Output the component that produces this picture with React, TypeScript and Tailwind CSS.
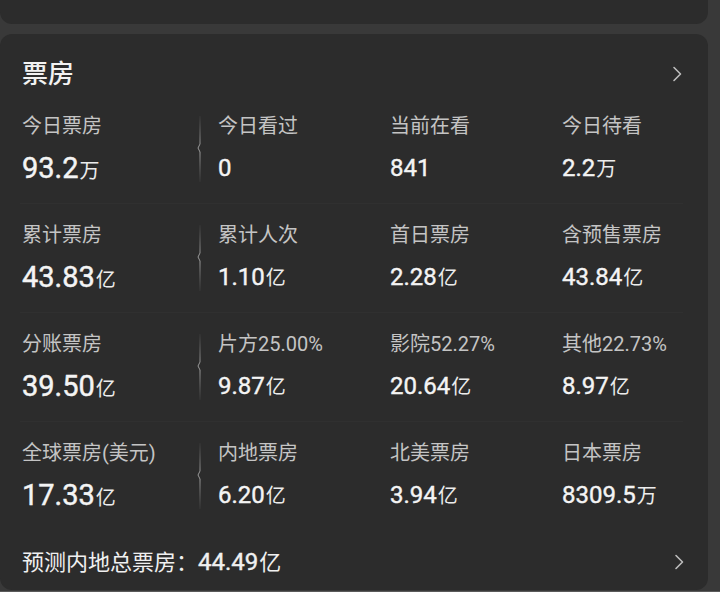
import React from "react";

const FONT = { fontFamily: 'Roboto, "Noto Sans CJK SC", "Noto Sans", sans-serif' };

function Chevron() {
  return (
    <svg width="10" height="16" viewBox="0 0 10 16" fill="none">
      <polyline points="2,1.5 8.5,8 2,14.5" stroke="#bdbdbd" strokeWidth="1.6" strokeLinecap="round" strokeLinejoin="round" />
    </svg>
  );
}

function VDivider() {
  return (
    <svg width="6" height="66" viewBox="0 0 6 66" fill="none">
      <defs>
        <linearGradient id="vg" x1="0" y1="0" x2="0" y2="1">
          <stop offset="0" stopColor="#8a8a8a" stopOpacity="0.1" />
          <stop offset="0.45" stopColor="#9a9a9a" stopOpacity="1" />
          <stop offset="0.55" stopColor="#9a9a9a" stopOpacity="1" />
          <stop offset="1" stopColor="#8a8a8a" stopOpacity="0.1" />
        </linearGradient>
      </defs>
      <path d="M4 0 L4 28 L2 32 L4 36 L4 66" stroke="url(#vg)" strokeWidth="1" />
    </svg>
  );
}

type Cell = { label: string; value: string; unit?: string };

const rows: Cell[][] = [
  [
    { label: "今日票房", value: "93.2", unit: "万" },
    { label: "今日看过", value: "0" },
    { label: "当前在看", value: "841" },
    { label: "今日待看", value: "2.2", unit: "万" },
  ],
  [
    { label: "累计票房", value: "43.83", unit: "亿" },
    { label: "累计人次", value: "1.10", unit: "亿" },
    { label: "首日票房", value: "2.28", unit: "亿" },
    { label: "含预售票房", value: "43.84", unit: "亿" },
  ],
  [
    { label: "分账票房", value: "39.50", unit: "亿" },
    { label: "片方25.00%", value: "9.87", unit: "亿" },
    { label: "影院52.27%", value: "20.64", unit: "亿" },
    { label: "其他22.73%", value: "8.97", unit: "亿" },
  ],
  [
    { label: "全球票房(美元)", value: "17.33", unit: "亿" },
    { label: "内地票房", value: "6.20", unit: "亿" },
    { label: "北美票房", value: "3.94", unit: "亿" },
    { label: "日本票房", value: "8309.5", unit: "万" },
  ],
];

function CellView({ c, big }: { c: Cell; big: boolean }) {
  return (
    <div className="flex flex-col">
      <div className="text-[20px] leading-[28px] text-[#c4c4c4] whitespace-nowrap">{c.label}</div>
      <div className="mt-[10px] flex items-baseline h-[36px] leading-[36px] text-[#f4f4f4] whitespace-nowrap">
        <span
          className={
            big
              ? "text-[29px] font-normal [-webkit-text-stroke:0.45px_#f4f4f4]"
              : "text-[24px] font-normal [-webkit-text-stroke:0.4px_#f4f4f4]"
          }
        >
          {c.value}
        </span>
        {c.unit && <span className="text-[20px] ml-[1px] text-[#ececec]">{c.unit}</span>}
      </div>
    </div>
  );
}

export default function App() {
  return (
    <div className="w-[720px] h-[602px] bg-[#393939] overflow-hidden flex flex-col" style={FONT}>
      <div className="w-[708px] h-[24px] bg-[#2c2c2c] rounded-b-[12px] shrink-0" />
      <div className="w-[708px] h-[556px] mt-[10px] bg-[#2c2c2c] rounded-[12px] shrink-0 pt-[22px] pl-[22px] pr-[24px] flex flex-col">
        <div className="flex items-center justify-between h-[36px]">
          <div className="text-[26px] font-medium text-[#f2f2f2] leading-[36px]">票房</div>
          <div className="mr-[2px]"><Chevron /></div>
        </div>
        <div className="mt-[20px] flex flex-col">
          {rows.map((r, i) => (
            <div key={i} className="flex flex-col">
              {i > 0 && (
                <div className="h-[35px] flex items-center">
                  <div className="w-[663px] -ml-[2px] h-px bg-[#303030]" />
                </div>
              )}
              <div className="grid grid-cols-[196px_172px_172px_1fr] h-[74px]">
                <div className="relative">
                  <CellView c={r[0]} big />
                  <div className="absolute left-[174px] top-[4px]"><VDivider /></div>
                </div>
                <CellView c={r[1]} big={false} />
                <CellView c={r[2]} big={false} />
                <CellView c={r[3]} big={false} />
              </div>
            </div>
          ))}
        </div>
        <div className="mt-[31px] flex items-center justify-between h-[36px]">
          <div className="flex items-baseline leading-[36px] text-[#f0f0f0] whitespace-nowrap">
            <span className="text-[22px]">预测内地总票房：</span>
            <span className="text-[24px] font-normal [-webkit-text-stroke:0.4px_#f0f0f0]">44.49</span>
            <span className="text-[22px] ml-[1px]">亿</span>
          </div>
          <div><Chevron /></div>
        </div>
      </div>
      <div className="h-[1px] bg-[#5a5a5a] mt-[1px]" />
      <div className="flex-1 bg-white" />
    </div>
  );
}
